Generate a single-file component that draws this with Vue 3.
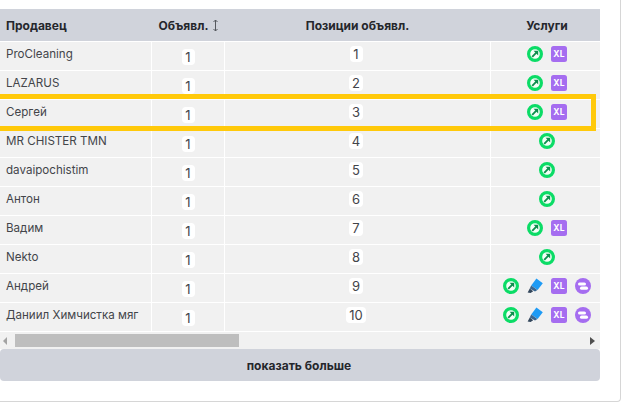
<script setup>
const rows = [
  ['ProCleaning', 1, ['up', 'xl']],
  ['LAZARUS', 2, ['up', 'xl']],
  ['Сергей', 3, ['up', 'xl']],
  ['MR CHISTER TMN', 4, ['up']],
  ['davaipochistim', 5, ['up']],
  ['Антон', 6, ['up']],
  ['Вадим', 7, ['up', 'xl']],
  ['Nekto', 8, ['up']],
  ['Андрей', 9, ['up', 'mark', 'xl', 'list']],
  ['Даниил Химчистка мяг', 10, ['up', 'mark', 'xl', 'list']],
]
</script>

<template>
  <div class="card">
    <div class="table">
      <div class="row head">
        <div class="cell name">Продавец</div>
        <div class="cell center count">
          Объявл.
          <svg class="sort" width="7" height="13" viewBox="0 0 7 13" fill="none" stroke="#55585e" stroke-width="1">
            <path d="M3.5 1v11M1.5 3l2-2 2 2M1.5 10l2 2 2-2" />
          </svg>
        </div>
        <div class="cell center pos">Позиции объявл.</div>
        <div class="cell center serv">Услуги</div>
      </div>
      <div v-for="r in rows" :key="r[0]" class="row body">
        <div class="cell name"><span class="seller">{{ r[0] }}</span></div>
        <div class="cell center"><span class="badge low">1</span></div>
        <div class="cell center pos"><span class="badge">{{ r[1] }}</span></div>
        <div class="cell center icons">
          <template v-for="ic in r[2]" :key="ic">
            <svg v-if="ic === 'up'" width="16" height="16" viewBox="0 0 16 16">
              <circle cx="8" cy="8" r="6.4" fill="#f4fff8" stroke="#0bdc66" stroke-width="3.2" />
              <path d="M5.2 10.8 9.6 6.4" stroke="#0c8f4d" stroke-width="1.9" />
              <path d="M6.6 4.8h4.6v4.6z" fill="#0c8f4d" />
            </svg>
            <svg v-else-if="ic === 'mark'" width="16" height="16" viewBox="0 0 16 16">
              <path d="M9.4 .6 15.8 5.2 10.6 12 4.2 7.4z" fill="#1e9bf5" />
              <path d="M4.2 7.4 10.4 12 8 13.6 2.8 10.6z" fill="#3a6690" />
              <path d="M2.8 10.6 6.2 13.2 3.6 15 .6 14.6z" fill="#33475c" />
            </svg>
            <svg v-else-if="ic === 'xl'" width="16" height="16" viewBox="0 0 16 16">
              <rect width="16" height="16" rx="2.5" fill="#a56df0" />
              <text x="8" y="11.4" text-anchor="middle" class="xl">XL</text>
            </svg>
            <svg v-else width="16" height="16" viewBox="0 0 16 16">
              <circle cx="8" cy="8" r="8" fill="#a56df0" />
              <rect x="3" y="4.4" width="8" height="3.2" rx="1.6" fill="#fff" />
              <rect x="5" y="8.6" width="8" height="3.2" rx="1.6" fill="#fff" />
            </svg>
          </template>
        </div>
      </div>
    </div>
    <div class="scroll">
      <span class="arrow left"></span>
      <span class="thumb"></span>
      <span class="arrow right"></span>
    </div>
    <button class="more">показать больше</button>
    <div class="highlight"></div>
  </div>
</template>

<style>
html, body { margin: 0; background: #fff; }
</style>

<style scoped>
.card {
  position: relative;
  box-sizing: border-box;
  width: 621px;
  height: 402px;
  padding: 9px 20px 0 0;
  background: #fff;
  border-right: 1px solid #d6d6d6;
  border-bottom: 1px solid #d6d6d6;
  border-bottom-right-radius: 4px;
  font-family: Inter, "Noto Sans", sans-serif;
  color: #2b2d33;
  overflow: hidden;
}
.table { display: flex; flex-direction: column; gap: 1px; background: #fff; }
.row { display: grid; grid-template-columns: 151px 72px 265px 109px; column-gap: 1px; }
.head { height: 32px; background: #d0d3db; font-size: 12px; font-weight: 700; color: #25272c; }
.head .cell { display: flex; align-items: center; }
.head .center { justify-content: center; }
.head .count { padding-left: 2px; }
.head .pos { padding-right: 0; }
.head .serv { padding-left: 3px; }
.sort { margin-left: 4px; }
.body { height: 28px; }
.body .cell { background: #f1f1f1; font-size: 11.6px; }
.name { padding-left: 6px; }
.seller { display: block; padding-top: 4px; line-height: 16px; color: #43454a; white-space: nowrap; }
.center { text-align: center; }
.pos { padding-right: 3px; }
.badge {
  display: inline-block;
  min-width: 7px;
  margin-top: 4px;
  padding: 0 3px;
  height: 16px;
  line-height: 17px;
  background: #fff;
  border-radius: 4px;
  color: #43454a;
  font-size: 13px;
}
.badge.low { margin-top: 7px; }
.icons { display: flex; justify-content: center; align-items: center; gap: 8px; padding: 0 0 4px 3px; box-sizing: border-box; }
.xl { font: 700 8.5px Inter, sans-serif; fill: #fff; letter-spacing: .3px; }
.scroll { display: flex; align-items: center; height: 17px; margin-top: 1px; background: #f1f1f1; }
.thumb { width: 224px; height: 13px; background: #bebebe; margin-left: 8px; }
.arrow { width: 0; height: 0; border-top: 4px solid transparent; border-bottom: 4px solid transparent; }
.arrow.left { margin-left: 3px; border-right: 4px solid #a3a3a3; }
.arrow.right { margin-left: auto; margin-right: 5px; border-left: 5px solid #505050; }
.more {
  display: block;
  width: 100%;
  height: 32px;
  border: 0;
  padding: 0 2px 0 0;
  border-radius: 4px;
  background: #d0d3db;
  font: 700 12px Inter, sans-serif;
  color: #25272c;
}
.highlight {
  position: absolute;
  left: -6px;
  top: 94px;
  width: 602px;
  height: 37px;
  box-sizing: border-box;
  border: 5px solid #ffc90a;
}
</style>
